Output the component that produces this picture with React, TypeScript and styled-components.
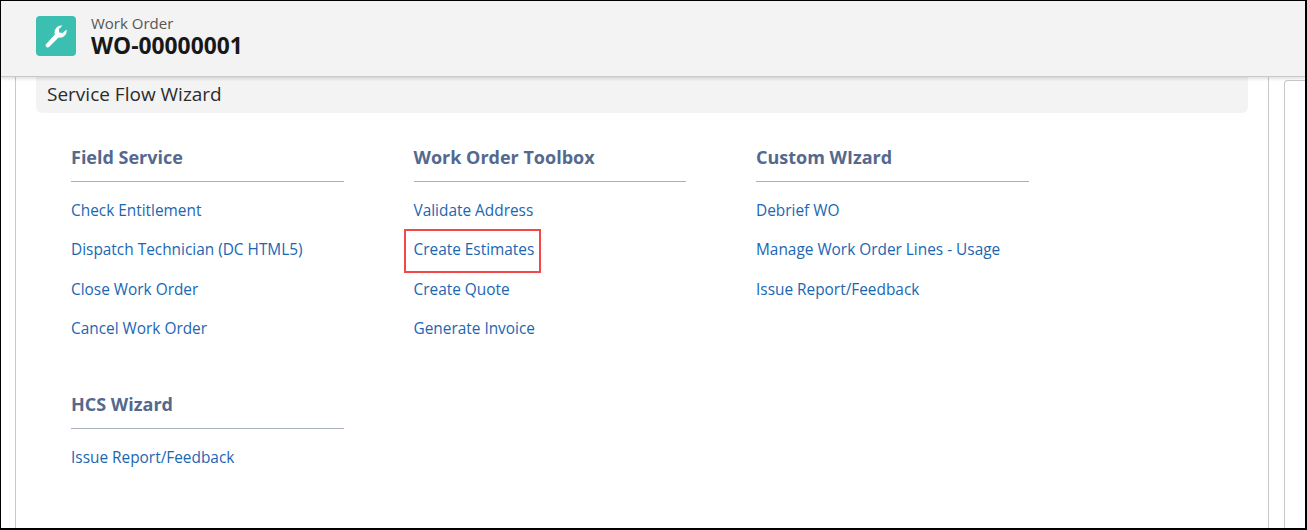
import React from 'react'
import styled, { createGlobalStyle } from 'styled-components'

const sections = [
  {
    title: 'Field Service',
    links: ['Check Entitlement', 'Dispatch Technician (DC HTML5)', 'Close Work Order', 'Cancel Work Order'],
  },
  {
    title: 'Work Order Toolbox',
    links: ['Validate Address', 'Create Estimates', 'Create Quote', 'Generate Invoice'],
  },
  {
    title: 'Custom WIzard',
    links: ['Debrief WO', 'Manage Work Order Lines - Usage', 'Issue Report/Feedback'],
  },
  {
    title: 'HCS Wizard',
    links: ['Issue Report/Feedback'],
  },
]

const App = () => {
  return (
    <Frame>
      <GlobalStyle />
      <Header>
        <IconTile>
          <svg width="40" height="40" viewBox="0 0 40 40">
            <path
              fill="#fff"
              d="M26.5 9.6 L22.8 13.2 L23.2 16.6 L26.6 17 L30.6 13.4 C31.5 17.5 28 22.5 22.5 21.5 L13 31 C11.5 32.5 8.5 30 10 28.2 L18.8 18.5 C17.5 13 22 8.5 26.5 9.6 Z"
            />
          </svg>
        </IconTile>
        <HeaderText>
          <Kind>Work Order</Kind>
          <RecordName>WO-00000001</RecordName>
        </HeaderText>
      </Header>
      <Body>
        <Panel>
          <Banner>Service Flow Wizard</Banner>
          <Sections>
            {sections.map((section) => (
              <Section key={section.title}>
                <SectionTitle>{section.title}</SectionTitle>
                <LinkList>
                  {section.links.map((link) => (
                    <LinkRow key={link}>
                      <WizardLink>{link}</WizardLink>
                      {link === 'Create Estimates' && <Highlight />}
                    </LinkRow>
                  ))}
                </LinkList>
              </Section>
            ))}
          </Sections>
        </Panel>
        <SideCard />
      </Body>
    </Frame>
  )
}

export default App

const GlobalStyle = createGlobalStyle`
html, body {
  margin: 0;
  padding: 0;
  background: #fff;
}
* {
  box-sizing: border-box;
}
`
const Frame = styled.div`
width: 1307px;
height: 530px;
display: flex;
flex-direction: column;
overflow: hidden;
border-style: solid;
border-color: #000;
border-width: 1px 2px 2px 1px;
font-family: "Open Sans", "Noto Sans", sans-serif;
background: #fff;
`
const Header = styled.div`
height: 76px;
flex-shrink: 0;
display: flex;
align-items: center;
padding: 0 0 5px 35px;
gap: 15px;
background: #f3f3f3;
border-bottom: 1px solid #c9c9c9;
box-shadow: 0 2px 3px rgba(0, 0, 0, 0.12);
position: relative;
z-index: 1;
`
const IconTile = styled.div`
width: 40px;
height: 40px;
border-radius: 4px;
background: #3bbfb1;
display: flex;
`
const HeaderText = styled.div`
display: flex;
flex-direction: column;
`
const Kind = styled.div`
font-size: 15px;
line-height: 20px;
color: #555;
`
const RecordName = styled.div`
font-size: 22.8px;
line-height: 26px;
font-weight: 700;
color: #181818;
`
const Body = styled.div`
flex: 1;
display: flex;
padding-left: 14px;
min-height: 0;
`
const Panel = styled.div`
width: 1254px;
flex-shrink: 0;
padding: 0 20px;
border-left: 1px solid #c9c9c9;
border-right: 1px solid #c9c9c9;
`
const Banner = styled.div`
height: 36px;
padding: 0 11px 2px;
display: flex;
align-items: center;
border-radius: 0 0 6px 6px;
background: #f3f3f3;
font-size: 19px;
color: #2b2b2b;
`
const Sections = styled.div`
display: grid;
grid-template-columns: repeat(3, 272.5px);
column-gap: 70px;
row-gap: 42.4px;
padding: 31px 0 0 35px;
`
const Section = styled.div`
display: flex;
flex-direction: column;
`
const SectionTitle = styled.div`
height: 38px;
font-size: 18px;
line-height: 26px;
font-weight: 700;
color: #54698d;
border-bottom: 1px solid #a8b0bd;
`
const LinkList = styled.div`
display: flex;
flex-direction: column;
padding-top: 9px;
`
const LinkRow = styled.div`
position: relative;
height: 39.3px;
display: flex;
align-items: center;
`
const WizardLink = styled.a`
font-size: 15.4px;
color: #1b66b3;
cursor: pointer;
`
const Highlight = styled.div`
position: absolute;
left: -10px;
top: -1px;
width: 137px;
height: 44px;
border: 2px solid #f44848;
`
const SideCard = styled.div`
width: 40px;
margin: 3px 0 0 15px;
border-left: 1px solid #c9c9c9;
border-top: 1px solid #c9c9c9;
border-radius: 4px 0 0 0;
`
